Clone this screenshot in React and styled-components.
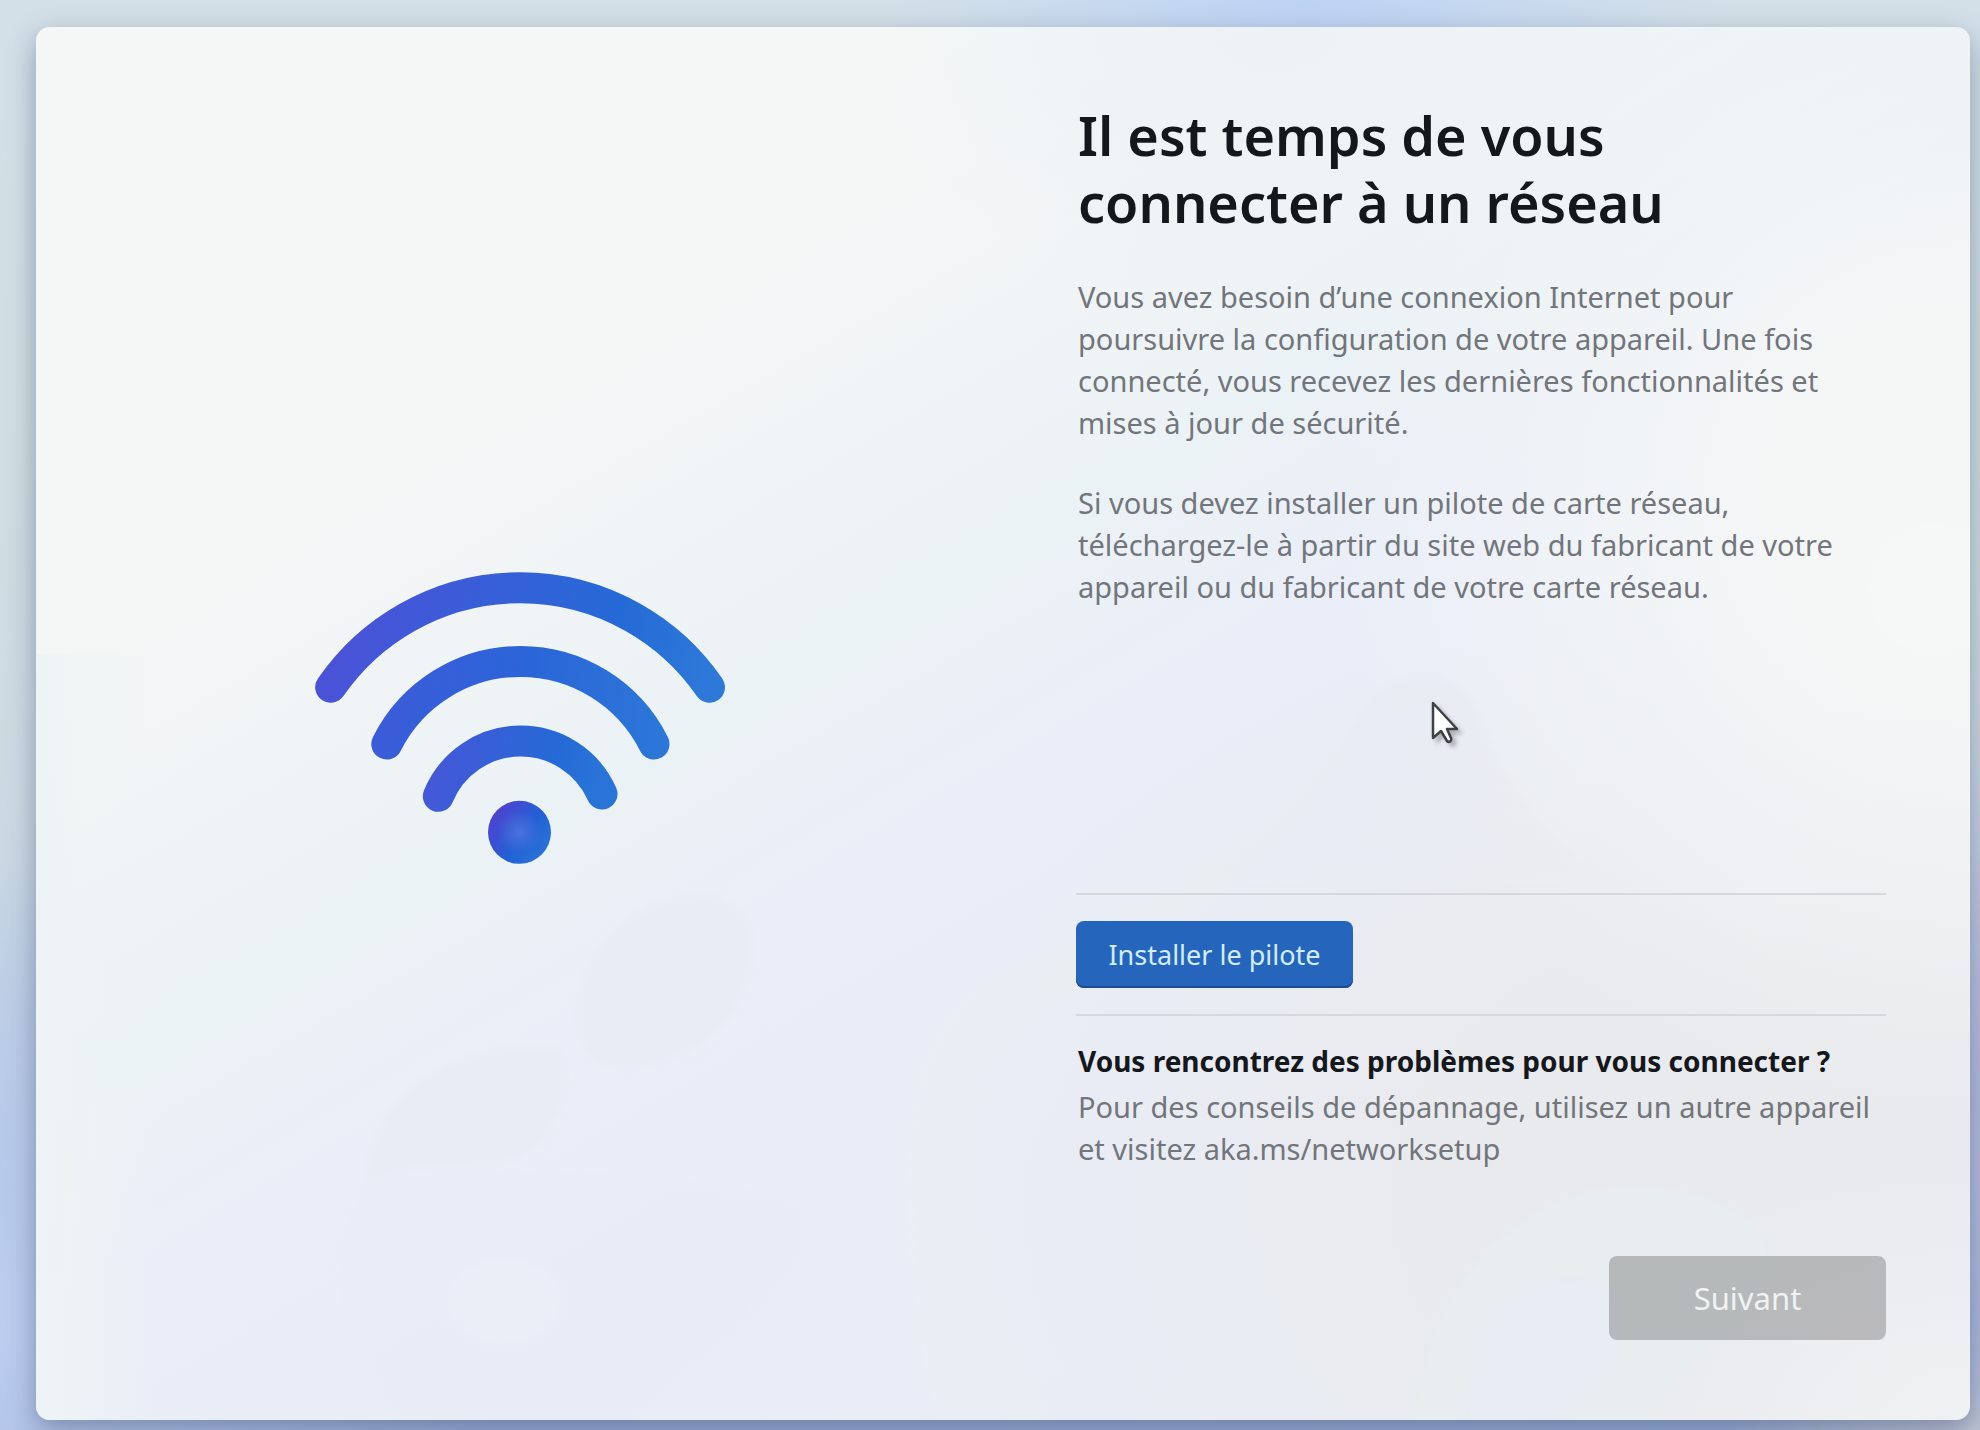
import React, { Component } from 'react'

import styled, { createGlobalStyle } from 'styled-components'

const GlobalStyle = createGlobalStyle`
    * {
        box-sizing: border-box;
    }
    body {
        margin: 0;
        color: #14181d;
        font-family: "Segoe UI", "Noto Sans", "Open Sans", sans-serif;
        font-size: 29px;
        line-height: 42px;
    }
    h1, h2, p {
        margin: 0;
    }
`

const Desktop = styled.div`
    display: flex;
    min-height: 100vh;
    padding: 27px 10px 10px 36px;
    background:
        radial-gradient(420px 200px at 66% 0, #bdd3f5, #bdd3f500),
        radial-gradient(500px 500px at 0 92%, #bccdf0, #bccdf000),
        radial-gradient(300px 400px at 100% 78%, #b3bbdc, #b3bbdc00),
        radial-gradient(260px 120px at 100% 100%, #c3c9d2, #c3c9d200),
        linear-gradient(#d3e0e8, #d0dfe3 30%, #cbd9e2 60%, #9fb6dc 94%, #9cb0d6);
`

const CardShadow = styled.div`
    flex: 1;
    display: flex;
    border-radius: 14px;
    box-shadow: 0 10px 28px rgba(38, 50, 90, 0.4);
`

const Card = styled.main`
    position: relative;
    flex: 1;
    display: grid;
    grid-template-columns: 1fr 1fr;
    overflow: hidden;
    border-radius: 14px;
    background:
        radial-gradient(640px 620px at 100% 34%, #f5f7f6 25%, #f5f7f600),
        radial-gradient(420px 260px at 100% 100%, #f0f1f3, #f0f1f300),
        radial-gradient(900px 620px at 92% 84%, #e9eaed 35%, #e9eaed00),
        radial-gradient(420px 300px at 64% 0, #edf2f6, #edf2f600),
        linear-gradient(150deg, #f5f7f6 20%, #f3f5f6 30%, #ebf2f5 43%, #eaeef8 52%, #e9edf7 68%, #e8edf6 85%, #eef0f2);

    &::before {
        content: "";
        position: absolute;
        inset: 45% 94% 0 0;
        background: linear-gradient(90deg, #eef4f5, #eef4f500);
    }
`

const Backdrop = styled.svg`
    position: absolute;
    inset: 0;
    width: 100%;
    height: 100%;
`

const Illustration = styled.div`
    position: relative;
    display: flex;
    align-items: center;
    justify-content: center;
    padding-bottom: 12px;
`

const Content = styled.section`
    position: relative;
    display: flex;
    flex-direction: column;
    padding: 75px 84px 80px 73px;
`

const Title = styled.h1`
    max-width: 640px;
    margin-left: 2px;
    margin-bottom: 40px;
    font-size: 54px;
    font-weight: 600;
    line-height: 67px;
`

const Text = styled.p`
    margin-left: 2px;
    color: #72757b;
    & + & {
        margin-top: 38px;
    }
`

const DriverRow = styled.div`
    margin-top: auto;
    padding: 26px 0;
    border-top: 2px solid #d7d8dc;
    border-bottom: 2px solid #d7d8dc;
`

const Button = styled.button`
    display: block;
    width: 277px;
    height: ${(props) => (props.$large ? '84px' : '67px')};
    padding: 0;
    border: 0;
    border-radius: 8px;
    background: #2566bc;
    box-shadow: inset 0 -2px 0 #1b4c93;
    color: #d3ecff;
    font-family: inherit;
    font-size: ${(props) => (props.$large ? '31px' : '27px')};

    &:disabled {
        background: rgba(0, 0, 0, 0.22);
        box-shadow: none;
        color: #f0f2f4;
    }
`

const Help = styled.div`
    margin-top: 24px;
`

const HelpTitle = styled.h2`
    margin-left: 2px;
    margin-bottom: 4px;
    font-size: 28px;
    font-weight: 700;
    line-height: 42px;
`

const Footer = styled.footer`
    display: flex;
    justify-content: flex-end;
    margin-top: 86px;
`

const Pointer = styled.svg`
    position: absolute;
    top: 673px;
    left: 427px;
    filter: drop-shadow(4px 4px 2px rgba(0, 0, 0, 0.25));
`

const Wifi = () => (
    <svg width="410" height="292" viewBox="314 572 410 292" fill="none" strokeWidth="31" strokeLinecap="round" aria-hidden="true">
        <defs>
            <linearGradient id="outer" gradientUnits="userSpaceOnUse" x1="340" y1="640" x2="690" y2="720">
                <stop offset="0" stopColor="#4a53d8" />
                <stop offset="0.5" stopColor="#3162d8" />
                <stop offset="0.75" stopColor="#256ad6" />
                <stop offset="1" stopColor="#2d78d8" />
            </linearGradient>
            <linearGradient id="middle" gradientUnits="userSpaceOnUse" x1="380" y1="700" x2="650" y2="750">
                <stop offset="0" stopColor="#3c5bd9" />
                <stop offset="0.5" stopColor="#2b65d8" />
                <stop offset="1" stopColor="#2c76d8" />
            </linearGradient>
            <linearGradient id="inner" gradientUnits="userSpaceOnUse" x1="440" y1="750" x2="590" y2="800">
                <stop offset="0" stopColor="#4458d8" />
                <stop offset="0.7" stopColor="#246ad6" />
                <stop offset="1" stopColor="#2a74d8" />
            </linearGradient>
            <linearGradient id="dot" x1="0.1" y1="0.2" x2="0.9" y2="0.8">
                <stop offset="0" stopColor="#4e43cf" />
                <stop offset="0.6" stopColor="#2161d6" />
                <stop offset="1" stopColor="#2a72d6" />
            </linearGradient>
            <radialGradient id="glow">
                <stop offset="0" stopColor="#4a72dc" />
                <stop offset="0.7" stopColor="#4a72dc" stopOpacity="0" />
            </radialGradient>
        </defs>
        <path stroke="url(#outer)" d="M329.7 687.3A230 230 0 0 1 708.5 687.3" />
        <path stroke="url(#middle)" d="M385.8 744A149.4 149.4 0 0 1 653 744" />
        <path stroke="url(#inner)" d="M437.3 796.3A89 89 0 0 1 601 794" />
        <circle cx="518.5" cy="832.3" r="31.5" fill="url(#dot)" />
        <circle cx="518.5" cy="832.3" r="31.5" fill="url(#glow)" />
    </svg>
)

/* faint petals behind the frosted card */
const Petals = () => (
    <Backdrop viewBox="0 0 1934 1393" preserveAspectRatio="none" aria-hidden="true">
        <defs>
            <filter id="soft" x="-10%" y="-10%" width="120%" height="120%">
                <feGaussianBlur stdDeviation="4" />
            </filter>
            <linearGradient id="hill" x1="0" y1="0" x2="0" y2="1">
                <stop offset="0" stopColor="#e7e9f0" stopOpacity="0.6" />
                <stop offset="1" stopColor="#e7e9f0" stopOpacity="0" />
            </linearGradient>
        </defs>
        <g filter="url(#soft)">
            <g fill="#e4e8ef" fillOpacity="0.4">
                <path d="M545 960C560 900 620 862 680 870C722 880 728 930 700 980C670 1030 600 1050 562 1035C540 1020 538 990 545 960Z" />
                <path d="M330 1140C350 1050 440 1010 525 1022C540 1060 520 1120 470 1135C420 1145 370 1130 330 1160Z" />
            </g>
            <path fill="#e7ecf8" fillOpacity="0.45" d="M330 1160C500 1130 700 1150 770 1180C780 1270 690 1300 600 1393H360C290 1320 290 1220 330 1160Z" />
            <ellipse cx="468" cy="1274" rx="56" ry="42" fill="#ecf0f6" fillOpacity="0.6" />
            <path fill="#eaf0f1" fillOpacity="0.4" d="M900 1393C850 1150 860 1010 960 950C1040 900 1200 850 1320 690C1250 900 1000 930 950 1060C915 1160 960 1280 1010 1393Z" />
            <path fill="url(#hill)" d="M1320 690C1350 640 1410 630 1440 680C1480 790 1530 840 1640 870C1500 900 1200 900 1080 900C1180 850 1270 780 1320 690Z" />
            <path fill="#e8eef0" fillOpacity="0.9" d="M1380 1393C1390 1260 1480 1160 1600 1158C1700 1160 1760 1210 1720 1280C1670 1330 1640 1350 1610 1393Z" />
            <path fill="#e7ebf5" fillOpacity="0.8" d="M1430 1393C1430 1300 1480 1240 1545 1250C1620 1270 1590 1350 1520 1393Z" />
            <circle cx="1898" cy="562" r="64" fill="#f7f9f8" fillOpacity="0.6" />
        </g>
    </Backdrop>
)

class App extends Component {
    render() {
        return (
            <Desktop>
                <GlobalStyle />
                <CardShadow>
                    <Card>
                        <Petals />
                        <Illustration>
                            <Wifi />
                        </Illustration>
                        <Content>
                            <Title>
                                Il est temps de vous connecter à un réseau
                            </Title>
                            <Text>
                                Vous avez besoin d’une connexion Internet pour poursuivre la configuration de votre appareil. Une fois connecté, vous recevez les dernières fonctionnalités et mises à jour de sécurité.
                            </Text>
                            <Text>
                                Si vous devez installer un pilote de carte réseau, téléchargez-le à partir du site web du fabricant de votre appareil ou du fabricant de votre carte réseau.
                            </Text>

                            <DriverRow>
                                <Button type="button">Installer le pilote</Button>
                            </DriverRow>

                            <Help>
                                <HelpTitle>Vous rencontrez des problèmes pour vous connecter ?</HelpTitle>
                                <Text>
                                    Pour des conseils de dépannage, utilisez un autre appareil et visitez aka.ms/networksetup
                                </Text>
                            </Help>

                            <Footer>
                                <Button type="button" $large disabled>Suivant</Button>
                            </Footer>

                            <Pointer width="32" height="44" viewBox="0 0 32 44" aria-hidden="true">
                                <path d="M3 3V38L11 31L17 41C19 43 22 41 21 38L17 29H27Z" fill="#fdfdff" stroke="#3e4045" strokeWidth="2.5" strokeLinejoin="round" />
                            </Pointer>
                        </Content>
                    </Card>
                </CardShadow>
            </Desktop>
        )
    }
}

export default App
